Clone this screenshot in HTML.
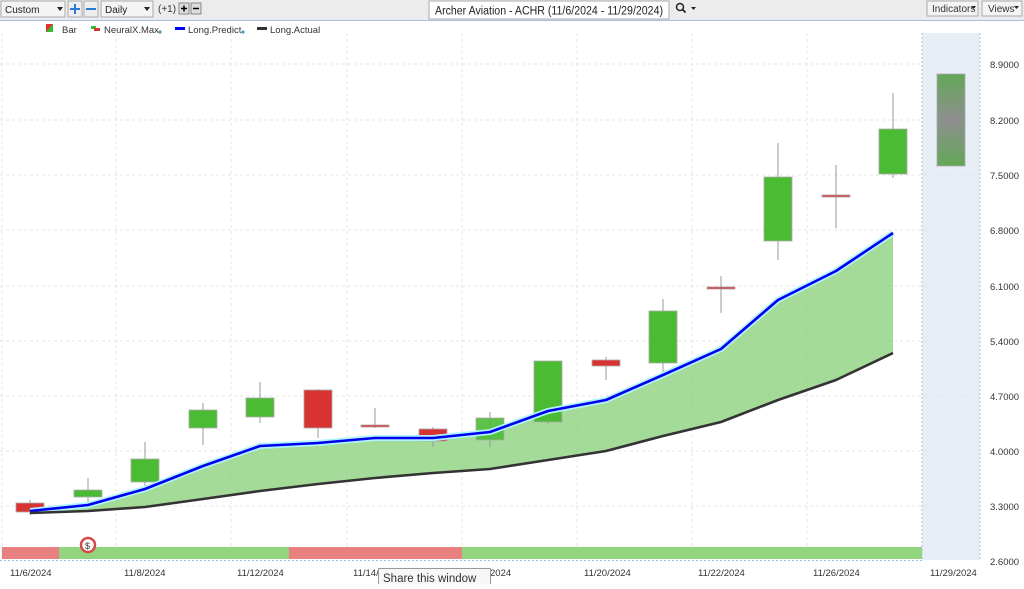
<!DOCTYPE html>
<html><head><meta charset="utf-8"><style>
body{margin:0;width:1024px;height:584px;overflow:hidden;background:#fff;font-family:"Liberation Sans",sans-serif;}
</style></head><body>
<svg width="1024" height="584" xmlns="http://www.w3.org/2000/svg" font-family="Liberation Sans, sans-serif">
<defs>
<linearGradient id="fg" x1="0" y1="0" x2="0" y2="1">
<stop offset="0" stop-color="#63a857"/><stop offset="0.5" stop-color="#8f8f8f"/><stop offset="1" stop-color="#63a857"/></linearGradient>
</defs>
<rect x="0" y="0" width="1024" height="20" fill="#ececec"/>
<line x1="0" y1="20.5" x2="1024" y2="20.5" stroke="#9cc3e6"/>
<rect x="1" y="1" width="64" height="16" fill="#f4f4f4" stroke="#aaa"/>
<text x="5" y="13" font-size="10" fill="#222">Custom</text>
<path d="M57 7h6l-3 4z" fill="#222"/>
<rect x="68" y="1" width="14" height="16" fill="#eee" stroke="#aaa"/>
<path d="M70 9h10M75 4v10" stroke="#2b7bd6" stroke-width="2"/>
<rect x="84" y="1" width="14" height="16" fill="#eee" stroke="#aaa"/>
<path d="M86 9h10" stroke="#2b7bd6" stroke-width="2"/>
<rect x="101" y="1" width="52" height="16" fill="#f4f4f4" stroke="#aaa"/>
<text x="105" y="13" font-size="10" fill="#222">Daily</text>
<path d="M144 7h6l-3 4z" fill="#222"/>
<text x="158" y="12" font-size="10" fill="#333">(+1)</text>
<rect x="179" y="3" width="10" height="11" fill="#ddd" stroke="#888"/><path d="M181 8.5h6M184 5.5v6" stroke="#000" stroke-width="1.5"/>
<rect x="191" y="3" width="10" height="11" fill="#ddd" stroke="#888"/><path d="M193 8.5h6" stroke="#000" stroke-width="1.5"/>
<rect x="429" y="1" width="240" height="18" fill="#fff" stroke="#aaa"/>
<text x="435" y="14.5" font-size="11.5" fill="#222" textLength="228" lengthAdjust="spacingAndGlyphs">Archer Aviation - ACHR (11/6/2024 - 11/29/2024)</text>
<circle cx="680" cy="7" r="3.5" fill="none" stroke="#222" stroke-width="1.5"/><path d="M682.5 9.5l3 3" stroke="#222" stroke-width="1.8"/>
<path d="M691 7h5l-2.5 3z" fill="#222"/>
<rect x="927" y="1" width="51" height="15" fill="#f4f4f4" stroke="#aaa"/>
<text x="932" y="12" font-size="10" fill="#333">Indicators</text><path d="M971 6h5l-2.5 3z" fill="#222"/>
<rect x="982" y="1" width="40" height="15" fill="#f4f4f4" stroke="#aaa"/>
<text x="988" y="12" font-size="10" fill="#333">Views</text><path d="M1014 6h5l-2.5 3z" fill="#222"/>
<path d="M46 24h7v8h-7z" fill="#d33"/><path d="M46 32l7-8v8z" fill="#3b3"/>
<text x="62" y="33" font-size="9.5" fill="#333">Bar</text>
<path d="M91 26h5v3h-5z" fill="#3b3"/><path d="M94 28h6v3h-6z" fill="#d33"/>
<text x="104" y="33" font-size="9.5" fill="#333">NeuralX.Max</text><circle cx="160" cy="32" r="1.6" fill="#5599bb"/>
<rect x="175" y="27" width="10" height="3" fill="#00f"/>
<text x="188" y="33" font-size="9.5" fill="#333">Long.Predict</text><circle cx="243" cy="32" r="1.6" fill="#5599bb"/>
<rect x="257" y="27" width="10" height="3" fill="#333"/>
<text x="270" y="33" font-size="9.5" fill="#333">Long.Actual</text>
<rect x="922" y="33" width="58" height="527" fill="#e8eef6"/>
<line x1="922" y1="33" x2="922" y2="560" stroke="#9cc3e6" stroke-dasharray="2,2"/>
<line x1="980" y1="33" x2="980" y2="560" stroke="#9cc3e6" stroke-dasharray="2,2"/>
<g stroke="#e4e4e4" stroke-dasharray="3,3">
<line x1="0" y1="64" x2="980" y2="64"/><line x1="0" y1="120" x2="980" y2="120"/><line x1="0" y1="175" x2="980" y2="175"/><line x1="0" y1="230" x2="980" y2="230"/><line x1="0" y1="286" x2="980" y2="286"/><line x1="0" y1="341" x2="980" y2="341"/><line x1="0" y1="396" x2="980" y2="396"/><line x1="0" y1="451" x2="980" y2="451"/><line x1="0" y1="506" x2="980" y2="506"/>
<line x1="116" y1="33" x2="116" y2="560"/><line x1="231" y1="33" x2="231" y2="560"/><line x1="347" y1="33" x2="347" y2="560"/><line x1="462" y1="33" x2="462" y2="560"/><line x1="577" y1="33" x2="577" y2="560"/><line x1="692" y1="33" x2="692" y2="560"/><line x1="807" y1="33" x2="807" y2="560"/>
<line x1="2" y1="33" x2="2" y2="560"/>
</g>
<g font-size="9.5" fill="#333">
<text x="990" y="68">8.9000</text><text x="990" y="124">8.2000</text><text x="990" y="179">7.5000</text><text x="990" y="234">6.8000</text><text x="990" y="290">6.1000</text><text x="990" y="345">5.4000</text><text x="990" y="400">4.7000</text><text x="990" y="455">4.0000</text><text x="990" y="510">3.3000</text><text x="990" y="565">2.6000</text>
<text x="10" y="576">11/6/2024</text><text x="124" y="576">11/8/2024</text><text x="237" y="576">11/12/2024</text><text x="353" y="576">11/14/</text><text x="490" y="576">2024</text><text x="584" y="576">11/20/2024</text><text x="698" y="576">11/22/2024</text><text x="813" y="576">11/26/2024</text><text x="930" y="576">11/29/2024</text>
</g>
<path d="M30 511L88 505L145 489L203 466L260 446L318 443L375 438L433 438L490 432L548 411L606 400L663 375L721 349L778 300L836 271L893 233L893 353L836 380L778 400L721 422L663 436L606 451L548 460L490 469L433 473L375 478L318 484L260 491L203 499L145 507L88 511L30 513Z" fill="#8fd27f" fill-opacity="0.8"/>
<g stroke="#999" stroke-width="1">
<line x1="30" y1="500" x2="30" y2="515"/><line x1="88" y1="478" x2="88" y2="503"/><line x1="145" y1="442" x2="145" y2="488"/><line x1="203" y1="403" x2="203" y2="445"/><line x1="260" y1="382" x2="260" y2="423"/><line x1="318" y1="389" x2="318" y2="438"/><line x1="375" y1="408" x2="375" y2="428"/><line x1="433" y1="427" x2="433" y2="447"/><line x1="490" y1="412" x2="490" y2="447"/><line x1="548" y1="361" x2="548" y2="424"/><line x1="606" y1="357" x2="606" y2="380"/><line x1="663" y1="299" x2="663" y2="372"/><line x1="721" y1="276" x2="721" y2="313"/><line x1="778" y1="143" x2="778" y2="260"/><line x1="836" y1="165" x2="836" y2="228"/><line x1="893" y1="93" x2="893" y2="178"/>
</g>
<g stroke="#aaa" stroke-width="0.8">
<rect x="16" y="503" width="28" height="9" fill="#d83232"/>
<rect x="74" y="490" width="28" height="7" fill="#4cbb34"/>
<rect x="131" y="459" width="28" height="23" fill="#4cbb34"/>
<rect x="189" y="410" width="28" height="18" fill="#4cbb34"/>
<rect x="246" y="398" width="28" height="19" fill="#4cbb34"/>
<rect x="304" y="390" width="28" height="38" fill="#d83232"/>
<rect x="361" y="425" width="28" height="2" fill="#d83232"/>
<rect x="419" y="429" width="28" height="12" fill="#d83232"/>
<rect x="476" y="418" width="28" height="22" fill="#4cbb34" fill-opacity="0.9"/>
<rect x="534" y="361" width="28" height="61" fill="#4cbb34"/>
<rect x="592" y="360" width="28" height="6" fill="#d83232"/>
<rect x="649" y="311" width="28" height="52" fill="#4cbb34"/>
<rect x="707" y="287" width="28" height="2" fill="#d83232"/>
<rect x="764" y="177" width="28" height="64" fill="#4cbb34"/>
<rect x="822" y="195" width="28" height="2" fill="#d83232"/>
<rect x="879" y="129" width="28" height="45" fill="#4cbb34"/>
<rect x="937" y="74" width="28" height="92" fill="url(#fg)"/>
</g>
<polyline points="30,511 88,505 145,489 203,466 260,446 318,443 375,438 433,438 490,432 548,411 606,400 663,375 721,349 778,300 836,271 893,233" fill="none" stroke="#aef4ff" stroke-width="6" stroke-linejoin="round"/>
<polyline points="30,511 88,505 145,489 203,466 260,446 318,443 375,438 433,438 490,432 548,411 606,400 663,375 721,349 778,300 836,271 893,233" fill="none" stroke="#0000ee" stroke-width="2.6" stroke-linejoin="round"/>
<polyline points="30,513 88,511 145,507 203,499 260,491 318,484 375,478 433,473 490,469 548,460 606,451 663,436 721,422 778,400 836,380 893,353" fill="none" stroke="#333" stroke-width="2.6" stroke-linejoin="round"/>
<rect x="2" y="547" width="57" height="12" fill="#e88080"/>
<rect x="59" y="547" width="230" height="12" fill="#93d57e"/>
<rect x="289" y="547" width="173" height="12" fill="#e88080"/>
<rect x="462" y="547" width="460" height="12" fill="#93d57e"/>
<circle cx="88" cy="545" r="7" fill="#fff" stroke="#d84a4a" stroke-width="2.5"/>
<text x="85" y="549" font-size="9" fill="#333">$</text>
<line x1="0" y1="560.5" x2="922" y2="560.5" stroke="#9cc3e6" stroke-dasharray="2,2"/>
<rect x="378.5" y="568.5" width="112" height="17" fill="#f7f7f7" stroke="#999"/>
<text x="383" y="582" font-size="11.5" fill="#333">Share this window</text>
</svg>
</body></html>
